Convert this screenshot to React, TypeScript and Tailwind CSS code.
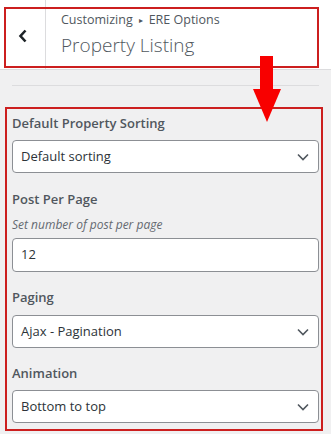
import React from "react";

const Chevron = () => (
  <svg width="12" height="8" viewBox="0 0 12 8" fill="none" className="shrink-0">
    <path d="M1 1.5 L6 6.5 L11 1.5" stroke="#50575e" strokeWidth="1.6" />
  </svg>
);

const Select = ({ value }: { value: string }) => (
  <div className="flex h-[33px] w-full items-center justify-between rounded-[4px] border border-[#8c8f94] bg-white pl-[8px] pr-[9px] text-[13px] text-[#2c3338]">
    <span>{value}</span>
    <Chevron />
  </div>
);

const Label = ({ children, className = "" }: { children: React.ReactNode; className?: string }) => (
  <div className={`text-[13px] font-semibold leading-[18px] text-[#50575e] ${className}`}>{children}</div>
);

export default function App() {
  return (
    <div
      className="relative h-[434px] w-[331px] overflow-hidden bg-[#f0f0f1]"
      style={{ fontFamily: '"Open Sans", "Noto Sans", sans-serif' }}
    >
      <div className="flex h-[70px] border-b border-[#dcdcde] bg-white">
        <div className="flex w-[46px] items-center justify-center border-r border-[#dcdcde] pt-[2px]">
          <svg width="10" height="14" viewBox="0 0 10 14" fill="none">
            <path d="M7.5 1.5 L2.5 7 L7.5 12.5" stroke="#1d2327" strokeWidth="2.6" />
          </svg>
        </div>
        <div className="flex flex-col pl-[15px] pt-[12px]">
          <div className="flex items-center text-[12.5px] leading-[16px] text-[#50575e]">
            <span>Customizing</span>
            <span className="mx-[6px] text-[8px]">▸</span>
            <span>ERE Options</span>
          </div>
          <div className="mt-[5px] text-[19px] font-light leading-[24px] text-[#50575e]">Property Listing</div>
        </div>
      </div>

      <div className="px-[12px]">
        <div className="mt-[15px] h-px w-full bg-[#dcdcde]" />

        <div className="mt-[28px]">
          <Label>Default Property Sorting</Label>
          <div className="mt-[8px]">
            <Select value="Default sorting" />
          </div>

          <Label className="mt-[17px]">Post Per Page</Label>
          <div className="mt-[9px] text-[12px] italic leading-[16px] text-[#646970]">Set number of post per page</div>
          <div className="mt-[5px] flex h-[34px] w-full items-center rounded-[4px] border border-[#8c8f94] bg-white pl-[8px] text-[13px] text-[#2c3338]">
            12
          </div>

          <Label className="mt-[16px]">Paging</Label>
          <div className="mt-[9px]">
            <Select value="Ajax - Pagination" />
          </div>

          <Label className="mt-[16px]">Animation</Label>
          <div className="mt-[8px]">
            <Select value="Bottom to top" />
          </div>
        </div>
      </div>

      {/* annotations */}
      <div className="pointer-events-none absolute left-[4px] top-[7px] h-[61px] w-[315px] border-2 border-[#cc1f1f]" />
      <div className="pointer-events-none absolute left-[5px] top-[107px] h-[324px] w-[318px] border-2 border-[#cc1f1f]" />
      <svg className="pointer-events-none absolute left-[253px] top-[56px]" width="29" height="67" viewBox="0 0 29 67">
        <rect x="7" y="0" width="13" height="34" fill="#f80000" />
        <polygon points="0,33 28,33 14,66" fill="#f80000" />
      </svg>
    </div>
  );
}
